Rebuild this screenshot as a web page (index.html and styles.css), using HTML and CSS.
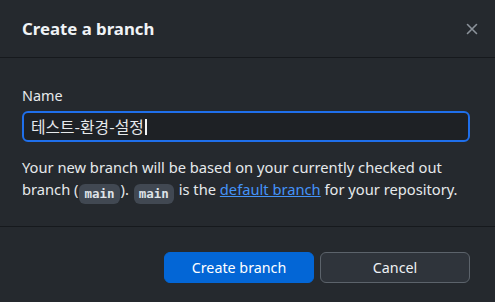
FILE: index.html
```html
<!DOCTYPE html>
<html lang="en">
<head>
<meta charset="utf-8">
<link rel="stylesheet" href="styles.css">
</head>
<body>
<div class="dialog">
  <div class="header">
    <h1 class="title">Create a branch</h1>
    <button class="close" aria-label="Close">
      <svg width="12" height="12" viewBox="0 0 12 12"><path d="M1.5 1.5 L10.5 10.5 M10.5 1.5 L1.5 10.5" stroke="#8b929a" stroke-width="1.6" stroke-linecap="round"/></svg>
    </button>
  </div>
  <div class="body">
    <label class="label">Name</label>
    <div class="input"><span class="value">테스트-환경-설정</span><span class="caret"></span></div>
    <p class="desc">Your new branch will be based on your currently checked out branch (<code class="code">main</code>). <code class="code">main</code> is the <a class="link" href="#">default branch</a> for your repository.</p>
  </div>
  <div class="footer">
    <button class="btn btn-primary">Create branch</button>
    <button class="btn btn-secondary">Cancel</button>
  </div>
</div>
</body>
</html>
```
FILE: styles.css
```css
* { box-sizing: border-box; }
html, body { margin: 0; padding: 0; }
body {
  background: #25292e;
  font-family: "Noto Sans", "Noto Sans CJK KR", sans-serif;
  color: #e6e9ec;
  width: 495px;
  height: 302px;
  overflow: hidden;
}
.dialog { display: flex; flex-direction: column; height: 302px; }
.header {
  height: 58px;
  display: flex;
  align-items: center;
  justify-content: space-between;
  padding: 0 16px 0 22px;
  border-bottom: 1px solid #16191d;
}
.title { margin: 0; font-size: 16.8px; font-weight: 700; color: #f0f3f6; }
.close { background: none; border: 0; padding: 0; width: 14px; height: 14px; display: flex; align-items: center; justify-content: center; }
.body { padding: 28px 25px 0 22px; height: 169px; border-bottom: 1px solid #16191d; }
.label { display: block; font-size: 14.4px; line-height: 20px; color: #e6e9ec; margin-bottom: 5px; }
.input {
  height: 31px;
  border: 2px solid #1f6feb;
  border-radius: 6px;
  background: #1e2125;
  display: flex;
  align-items: center;
  padding: 0 7px;
  font-family: "Noto Sans CJK KR", sans-serif;
  font-size: 15.8px;
  color: #e6e9ec;
}
.caret { width: 2px; height: 16px; background: #f0f3f6; margin-left: 1px; }
.desc { margin: 14px 0 0; font-size: 14.7px; line-height: 22px; color: #e6e9ec; }
.code {
  display: inline-block;
  font-family: "DejaVu Sans Mono", monospace;
  font-size: 12.5px;
  font-weight: 700;
  line-height: 20px;
  height: 20px;
  background: #414852;
  color: #dfe3e8;
  border-radius: 6px;
  padding: 0 5px;
  margin: 0 1px;
  vertical-align: -3px;
}
.link { color: #4493f8; text-decoration: underline; }
.footer {
  display: flex;
  justify-content: flex-end;
  gap: 6px;
  padding: 25px 25px 0 0;
}
.btn {
  width: 150px;
  height: 31px;
  border-radius: 6px;
  font-family: "Noto Sans", sans-serif;
  font-size: 14.3px;
  color: #ffffff;
}
.btn-primary { background: #0366d6; border: 1px solid #0366d6; }
.btn-secondary { background: #2f343b; border: 1px solid #5c636b; color: #eef1f4; }
```
